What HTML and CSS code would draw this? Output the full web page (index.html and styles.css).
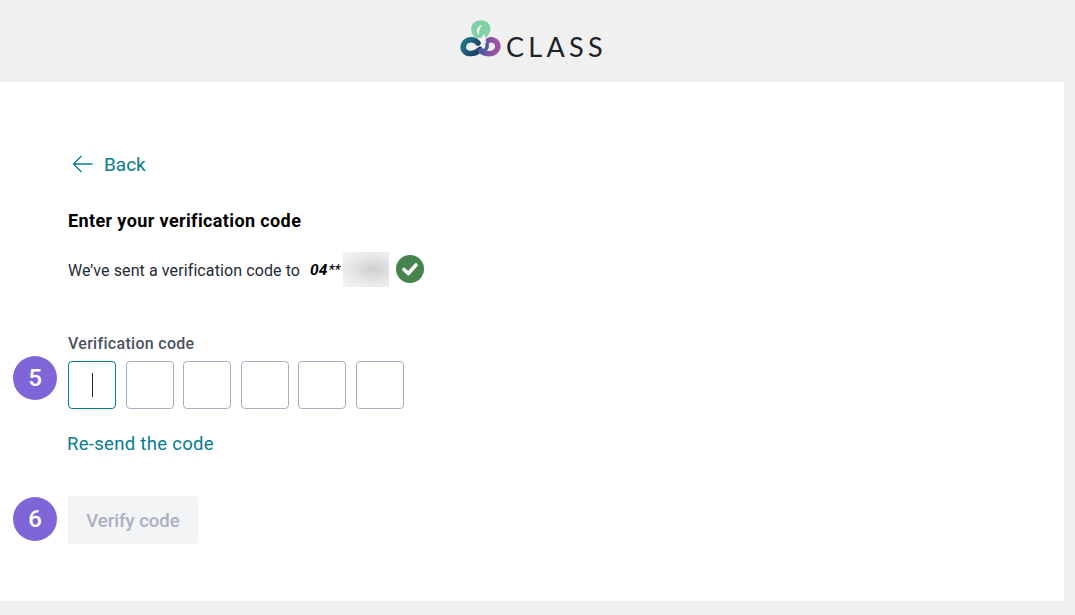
FILE: index.html
```html
<!DOCTYPE html>
<html lang="en">
<head>
    <meta charset="UTF-8">
    <meta name="viewport" content="width=device-width, initial-scale=1.0">
    <title>Verification code</title>
    <link rel="stylesheet" href="styles.css">
</head>
<body>
    <header class="top-bar">
        <div class="logo">
            <svg class="logo-mark" width="44" height="42" viewBox="0 0 44 42" fill="none">
                <defs>
                    <linearGradient id="grad-left" x1="0" y1="0" x2="1" y2="0.6">
                        <stop offset="0%" stop-color="#1f7a8c"/>
                        <stop offset="100%" stop-color="#1c3f63"/>
                    </linearGradient>
                    <linearGradient id="grad-right" x1="0" y1="0" x2="1" y2="0">
                        <stop offset="0%" stop-color="#5a5aa8"/>
                        <stop offset="100%" stop-color="#a4509f"/>
                    </linearGradient>
                </defs>
                <!-- folha verde -->
                <path d="M17 20 C11.500 16 11 9 14 5.500 C18 1 26 1 29.500 5.500 C33 10 31.500 15 27 20 L25 16 C24 18 23 19 21.500 20 Z" fill="#7fd0a4"/>
                <path d="M23 7 C20 7.500 17.500 10.500 18 14 C18.300 15.500 19 16.500 19.500 17.500 C20 13 21 10 23 7 Z" fill="#f0f0f0"/>
                <!-- anel azul -->
                <path d="M19 25 C15.500 20.500 8.500 20.500 5.500 25 C2.500 30 5 35 10 35.500 C14 36 18 34.500 21 31.500" stroke="url(#grad-left)" stroke-width="5.500" stroke-linecap="round"/>
                <!-- anel roxo -->
                <path d="M22 33 C26 36.500 33 36.500 36.500 33.500 C40.500 29.500 39 24 35 22.500 C33 21.500 31 21.500 29.500 22.500" stroke="url(#grad-right)" stroke-width="5.500" stroke-linecap="round"/>
                <path d="M21 33 C26 34 29 30 28 26" stroke="#4e5a9f" stroke-width="3.500" stroke-linecap="round"/>
            </svg>
            <span class="logo-text">CLASS</span>
        </div>
    </header>

    <main class="panel">
        <a class="back-link" href="#">
            <svg width="22" height="18" viewBox="0 0 22 18" fill="none" stroke="#057d8c" stroke-width="1.300">
                <path d="M20.500 9 H1.500 M9.500 1 L1.500 9 L9.500 17"/>
            </svg>
            <span>Back</span>
        </a>

        <h1 class="title">Enter your verification code</h1>

        <div class="sent-row">
            <span class="sent-text">We’ve sent a verification code to</span>
            <span class="phone">04<span class="phone-stars">**</span><span class="phone-blur"></span></span>
            <svg class="check" width="28" height="28" viewBox="0 0 28 28">
                <circle cx="14" cy="14" r="14" fill="#47834c"/>
                <path d="M8 14.500 L12.300 18.500 L20 10" fill="none" stroke="white" stroke-width="3.600" stroke-linecap="round" stroke-linejoin="round"/>
            </svg>
        </div>

        <div class="code-field">
            <span class="step-badge">5</span>
            <label class="code-label">Verification code</label>
            <div class="code-boxes">
                <div class="code-box active"><span class="caret"></span></div>
                <div class="code-box"></div>
                <div class="code-box"></div>
                <div class="code-box"></div>
                <div class="code-box"></div>
                <div class="code-box"></div>
            </div>
        </div>

        <a class="resend" href="#">Re-send the code</a>

        <div class="verify-row">
            <span class="step-badge">6</span>
            <button class="verify-btn" disabled>Verify code</button>
        </div>
    </main>
</body>
</html>
```

FILE: styles.css
```css
body {
    margin: 0;
    height: 615px;
    overflow: hidden;
    background: #f0f0f0;
    font-family: Roboto, "Liberation Sans", sans-serif;
    color: #000;
}
a {
    text-decoration: none;
}
.top-bar {
    height: 82px;
    display: flex;
    justify-content: center;
}
.logo {
    display: flex;
    align-items: flex-start;
    margin-left: -9px;
    padding-top: 18px;
}
.logo-text {
    margin: 14px 0 0 3px;
    font-family: Lato, sans-serif;
    font-size: 27px;
    line-height: 30px;
    letter-spacing: 4.300px;
    color: #1e2226;
}
.panel {
    width: 996px;
    height: 519px;
    padding-left: 68px;
    background: white;
    overflow: hidden;
}
.back-link {
    display: flex;
    align-items: center;
    gap: 10px;
    margin: 70px 0 0 4px;
    height: 24px;
    color: #057d8c;
    font-size: 19px;
}
.title {
    margin: 34px 0 0 0;
    font-size: 18px;
    line-height: 22px;
    font-weight: 700;
    letter-spacing: 0.380px;
}
.sent-row {
    display: flex;
    align-items: center;
    margin-top: 20px;
    height: 35px;
    font-size: 16px;
    letter-spacing: 0.100px;
    color: #1f2933;
}
.sent-text {
    padding-top: 2px;
}
.phone {
    display: flex;
    align-items: center;
    margin-left: 10px;
    font-size: 15.500px;
    font-weight: 700;
    font-style: italic;
    color: #000;
}
.phone-stars {
    font-size: 14px;
    font-weight: 400;
    margin-left: 1px;
}
.phone-blur {
    display: block;
    width: 46px;
    height: 35px;
    margin-left: 3px;
    background: radial-gradient(ellipse at 65% 50%, #cfcfcf 0%, #e8e8e8 55%, #f5f5f5 100%);
}
.check {
    margin: 0 0 1px 7px;
}
.code-field {
    position: relative;
    margin-top: 46px;
}
.code-label {
    display: block;
    height: 28px;
    line-height: 22px;
    font-size: 16px;
    letter-spacing: 0.300px;
    font-weight: 500;
    color: #4a5361;
}
.code-boxes {
    display: flex;
    gap: 9.600px;
}
.code-box {
    box-sizing: border-box;
    width: 48px;
    height: 48px;
    display: flex;
    align-items: center;
    justify-content: center;
    border: 1px solid #a9b0bf;
    border-radius: 4px;
}
.code-box.active {
    border-color: #057d8c;
}
.caret {
    width: 1px;
    height: 24px;
    background: #1f2933;
}
.resend {
    display: block;
    margin: 23px 0 0 -1px;
    line-height: 24px;
    font-size: 18.500px;
    letter-spacing: 0.300px;
    color: #057d8c;
}
.verify-row {
    position: relative;
    margin-top: 40px;
}
.verify-btn {
    display: block;
    width: 130px;
    height: 48px;
    padding-top: 3px;
    border: none;
    border-radius: 4px;
    background: #f3f4f6;
    color: #a9b0bf;
    font-family: inherit;
    font-size: 18.500px;
    font-weight: 500;
}
/* marcadores numerados por cima da tela */
.step-badge {
    position: absolute;
    left: -55px;
    width: 44px;
    height: 44px;
    border-radius: 50%;
    background: #7e66d8;
    color: white;
    font-family: Roboto, sans-serif;
    font-weight: 500;
    font-size: 24px;
    line-height: 44px;
    text-align: center;
}
.code-field .step-badge {
    top: 23px;
}
.verify-row .step-badge {
    top: 1px;
}
```
